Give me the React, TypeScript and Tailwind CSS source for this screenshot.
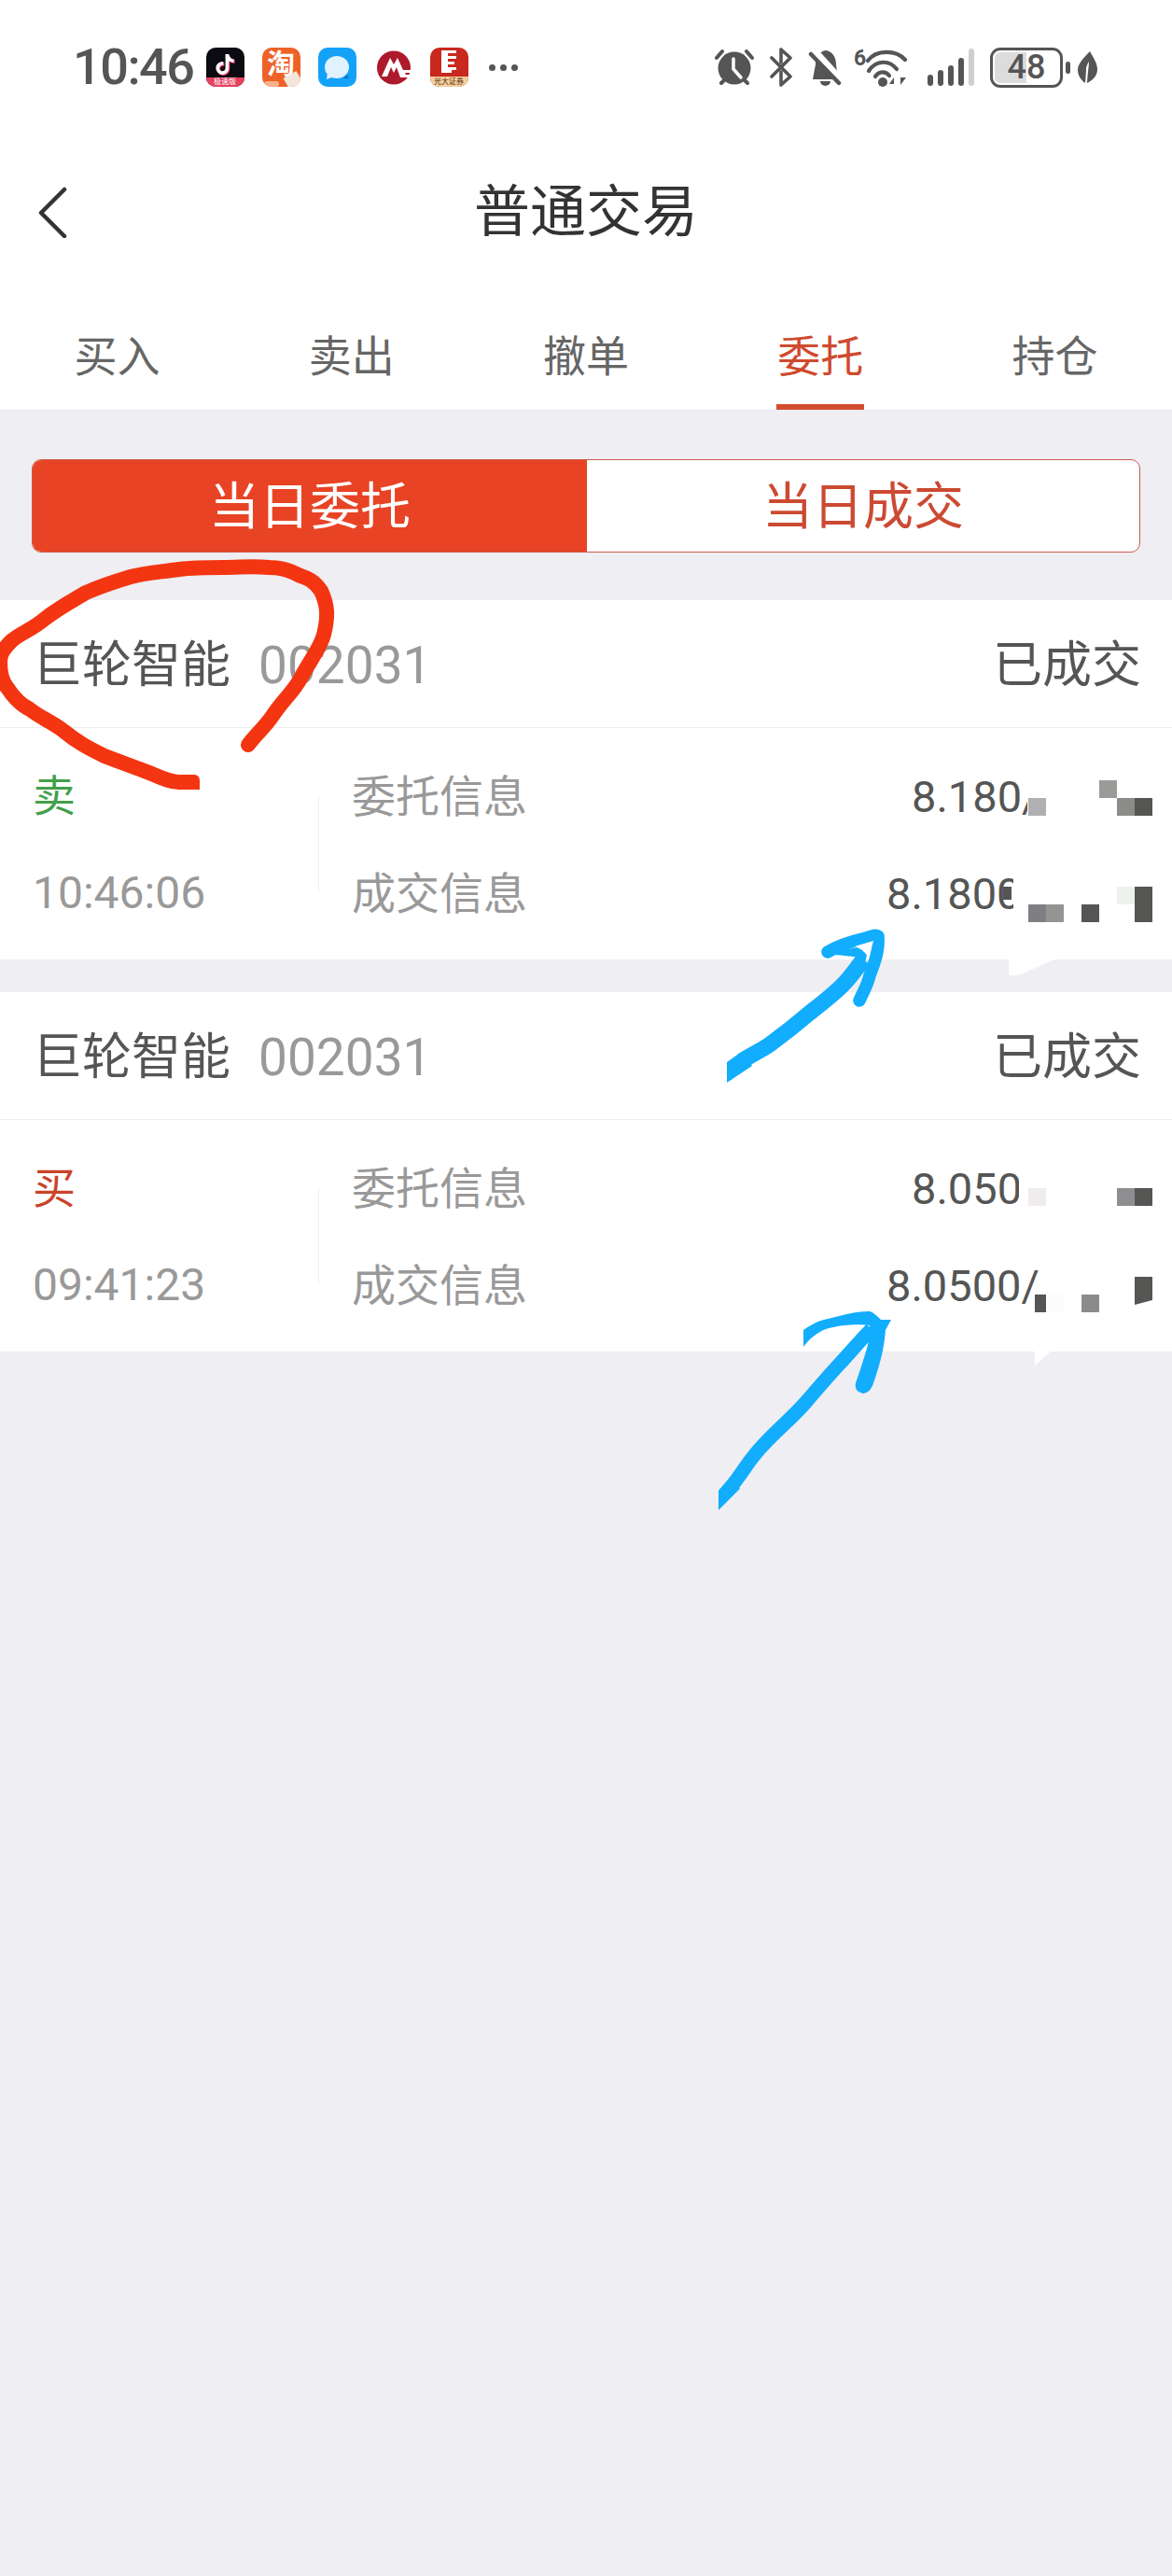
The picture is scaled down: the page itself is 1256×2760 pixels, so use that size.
import React from "react";
import { FaTiktok } from "react-icons/fa";

const FONT = "[font-family:Roboto,'Noto_Sans_CJK_SC',sans-serif]";

function AppIcons() {
  return (
    <div className="flex items-center gap-[19px] ml-[13px]">
      <div className="relative w-[41px] h-[42px] rounded-[10px] bg-[#0b0b12] overflow-hidden flex justify-center pt-[7px]">
        <FaTiktok className="text-white text-[22px] drop-shadow-[1px_1px_0_#f0295a]" />
        <div className="absolute left-0 right-0 bottom-0 h-[10px] bg-[#e8405e] text-white text-[8px] leading-[10px] text-center">极速版</div>
      </div>
      <div className="relative w-[41px] h-[42px] rounded-[10px] bg-[#ee6228] overflow-hidden flex justify-center">
        <span className="text-white text-[30px] leading-[36px] font-bold">淘</span>
        <div className="absolute left-[2px] bottom-0 w-[16px] h-[6px] rounded-full bg-[#f6b28c]" />
        <div className="absolute right-0 bottom-0 w-[16px] h-[14px] bg-[#f3e6dc] rotate-[-30deg]" />
      </div>
      <svg width="41" height="42" viewBox="0 0 41 42">
        <rect width="41" height="42" rx="10" fill="#14a2f8" />
        <path d="M27 33 L33 33 L31 29 Z" fill="#0a73d6" />
        <ellipse cx="20" cy="21" rx="13" ry="12" fill="#dff2fe" />
        <path d="M10 27 L9 34 L17 31 Z" fill="#dff2fe" />
      </svg>
      <svg width="36" height="37" viewBox="0 0 36 37" className="ml-[3px] mr-[2px]">
        <circle cx="18" cy="18.5" r="18" fill="#ad1a2c" />
        <path d="M5 28 L14 8 L18 15 L22 8 L28 21 L36 21 L36 24 L30 24 L31 26 L36 26 L35 29 L25 29 L21 18 L18 24 L15 18 L11 28 Z" fill="#fff" />
      </svg>
      <div className="relative w-[41px] h-[42px] rounded-[10px] bg-[#c8281e] overflow-hidden flex flex-col items-center">
        <svg width="22" height="28" viewBox="0 0 22 28" className="mt-[3px]">
          <path d="M3 0 H19 V3 H10 V6 H19 V9 H10 V12 H17 V15 H10 V18 H19 V21 H14 V24 H3 Z" fill="#fff" />
        </svg>
        <div className="absolute left-0 right-0 bottom-0 h-[11px] bg-[#f1cf9b] text-[#5a2a10] text-[8px] leading-[11px] text-center">光大证券</div>
      </div>
      <div className="flex gap-[5px] ml-[3px]">
        <span className="w-[7px] h-[7px] rounded-full bg-[#555]" />
        <span className="w-[7px] h-[7px] rounded-full bg-[#555]" />
        <span className="w-[7px] h-[7px] rounded-full bg-[#555]" />
      </div>
    </div>
  );
}

function StatusIcons() {
  return (
    <div className="ml-auto pr-[80px] flex items-center">
      <svg width="42" height="40" viewBox="0 0 42 40" fill="none" stroke="#555" strokeWidth="4" strokeLinecap="round">
        <path d="M2 10 L8 3 M40 10 L34 3 M7 37 L10 34 M35 37 L32 34" />
        <circle cx="21" cy="21" r="17.5" fill="#555" stroke="none" />
        <path d="M20 11 V22 L28 31" stroke="#fff" strokeWidth="3.5" />
      </svg>
      <svg width="26" height="42" viewBox="0 0 26 42" fill="none" stroke="#555" strokeWidth="3.6" strokeLinecap="round" strokeLinejoin="round" className="ml-[16px]">
        <path d="M3 11 L23 31 L13 40 L13 26 M3 31 L23 11 L13 2 L13 16" />
      </svg>
      <svg width="36" height="41" viewBox="0 0 36 41" className="ml-[16px]">
        <path d="M19 2 C12 3 8 9 8 17 L5 33 L32 33 L30 17 C30 9 26 3 19 2Z" fill="#555" />
        <path d="M13 35 H24 A5.5 5 0 0 1 13 35Z" fill="#555" />
        <path d="M6 2 L36 35" stroke="#fff" strokeWidth="8" />
        <path d="M3 6 L33 37" stroke="#555" strokeWidth="4.5" strokeLinecap="round" />
      </svg>
      <svg width="57" height="44" viewBox="0 0 57 44" fill="none" stroke="#555" strokeWidth="4.2" strokeLinecap="round" className="ml-[13px]">
        <text x="0" y="20" fill="#555" stroke="none" fontSize="23" fontWeight="700" fontFamily="Roboto, sans-serif">6</text>
        <path d="M15 15 C24 3 45 3 55 14" />
        <path d="M16 26 C24 14 38 14 46 24" />
        <path d="M23 32 C27 26 34 26 38 31" />
        <circle cx="31" cy="38" r="5" fill="#555" stroke="none" />
        <path d="M43 43 V33 L38 40 H43 M50 43 V33 L56 33 L50 41 Z" fill="#555" stroke="none" />
      </svg>
      <div className="ml-[22px] flex items-end gap-[4.5px] h-[40px]">
        <span className="w-[6.5px] h-[12px] rounded-full bg-[#555]" />
        <span className="w-[6.5px] h-[17px] rounded-full bg-[#555]" />
        <span className="w-[6.5px] h-[22px] rounded-full bg-[#555]" />
        <span className="w-[6.5px] h-[30px] rounded-full bg-[#555]" />
        <span className="w-[6.5px] h-[40px] rounded-full bg-[#cfcfcf]" />
      </div>
      <div className="ml-[17px] relative w-[78px] h-[43px] rounded-[11px] border-[3px] border-[#555] bg-white overflow-hidden flex items-center justify-center">
        <div className="absolute left-[2px] top-[2px] bottom-[2px] w-[34px] rounded-l-[6px] bg-[#dcdcdc]" />
        <span className="relative text-[#555] text-[36px] leading-none font-medium">48</span>
      </div>
      <span className="ml-[3px] w-[5px] h-[13px] rounded-full bg-[#555]" />
      <svg width="21" height="34" viewBox="0 0 21 34" className="ml-[8px]">
        <path d="M13 0 C5 8 0 14 0 20 C0 27 5 32 8 34 L9 20 C9 15 11 13 12 11 C12 15 11 20 10 34 C18 30 21 25 21 19 C21 12 16 6 13 0Z" fill="#555" />
      </svg>
    </div>
  );
}

function Row({ label, value, ml }: { label: string; value: string; ml: string }) {
  return (
    <div className="h-[104px] flex items-center">
      <span className="w-[184px] text-[47px] text-[#999] leading-none whitespace-nowrap">{label}</span>
      <span className={`${ml} text-[47px] text-[#555] leading-none whitespace-nowrap`}>{value}</span>
    </div>
  );
}

function Card({
  side,
  sideColor,
  time,
  rows,
  className,
}: {
  side: string;
  sideColor: string;
  time: string;
  rows: React.ReactNode;
  className?: string;
}) {
  return (
    <div className={`bg-white ${className ?? ""}`}>
      <div className="h-[137px] pt-[5px] pl-[35px] pr-[33px] flex items-center border-b border-[#eeeeee]">
        <span className="text-[53px] text-[#555] leading-none">巨轮智能</span>
        <span className="ml-[30px] text-[55px] text-[#999] leading-none">002031</span>
        <span className="ml-auto text-[53px] text-[#555] leading-none">已成交</span>
      </div>
      <div className="h-[248px] flex pt-[21px]">
        <div className="w-[341px] pl-[35px]">
          <div className={`h-[104px] flex items-center text-[46px] leading-none ${sideColor}`}>{side}</div>
          <div className="h-[104px] flex items-center text-[48px] text-[#999] leading-none">{time}</div>
        </div>
        <div className="w-px h-[101px] mt-[53px] bg-[#eeeeee]" />
        <div className="pl-[35px]">{rows}</div>
      </div>
    </div>
  );
}

function Overlay() {
  const rects: [number, number, number, number, string][] = [
    [1101, 830, 40, 50, "#ffffff"],
    [1086, 935, 60, 55, "#ffffff"],
    [1092, 1245, 40, 50, "#ffffff"],
    [1102, 855, 19, 19, "#b1afb2"],
    [1178, 836, 19, 19, "#9a9b99"],
    [1197, 855, 19, 19, "#8b8c8a"],
    [1216, 855, 19, 19, "#555653"],
    [1102, 969, 19, 19, "#807e82"],
    [1121, 969, 19, 19, "#949593"],
    [1159, 969, 19, 19, "#555653"],
    [1197, 950, 19, 19, "#eef2ef"],
    [1216, 950, 19, 38, "#555653"],
    [1075, 950, 9, 14, "#555653"],
    [1102, 1273, 19, 19, "#efebef"],
    [1197, 1273, 19, 19, "#8e8d8f"],
    [1216, 1273, 19, 19, "#555653"],
    [1109, 1387, 12, 19, "#555653"],
    [1121, 1387, 19, 19, "#fdfbfd"],
    [1159, 1387, 19, 19, "#8b8c8a"],
  ];
  return (
    <svg className="absolute left-0 top-0 pointer-events-none" width="1256" height="2760" viewBox="0 0 1256 2760" fill="none">
      <path d="M1081 1028 H1130 L1092 1045 H1081 Z" fill="#fff" />
      <path d="M1109 1448 H1126 L1109 1463 Z" fill="#fff" />
      {rects.map(([x, y, w, h, c], i) => (
        <rect key={i} x={x} y={y} width={w} height={h} fill={c} />
      ))}
      <path d="M1216 1368 H1235 V1393 L1216 1398 Z" fill="#555653" />
      {/* red hand-drawn circle */}
      <path
        d="M266 798 C275 786 283 780 292 767 C303 750 314 742 322 727 C332 708 343 695 347 680 C352 660 351 648 344 633 C336 621 328 619 322 617 C306 609 298 608 288 608 C270 606 258 608 240 608 C222 608 208 608 192 610 C172 613 158 613 140 618 C120 624 110 627 92 635 C75 645 62 652 48 663 C34 675 22 678 12 687 C2 697 0 702 0 710 C0 722 3 731 8 737 C15 748 22 755 32 760 C45 770 55 773 68 783 C85 797 98 803 112 810 C130 817 145 822 160 828 C172 833 182 838 192 838"
        stroke="#f43511"
        strokeWidth="16"
        strokeLinecap="round"
      />
      <path d="M190 830 H208 C212 830 214 833 214 837 V846 H190 Z" fill="#f43511" />
      {/* blue arrow 1 */}
      <path d="M779 1138 L796 1126 L806 1142 L779 1160 Z" fill="#12adfc" />
      <path
        d="M795 1137 C805 1130 815 1126 825 1119 C840 1108 855 1096 868 1085 C883 1073 897 1063 908 1050 C915 1042 920 1035 925 1028"
        stroke="#12adfc"
        strokeWidth="17"
      />
      <path d="M887 1020 C900 1012 915 1008 928 1005 C934 1003 938 1001 941 1003 C942 1018 938 1030 932 1045 C930 1055 925 1063 921 1072" stroke="#12adfc" strokeWidth="13.5" strokeLinecap="round" strokeLinejoin="round" />
      <path d="M887 1022 C900 1024 912 1024 920 1026 L926 1035 L932 1012 Z" fill="#12adfc" />
      <path d="M916 1014 L936 1008 L931 1027 C929 1022 923 1016 916 1014 Z" fill="#fff" />
      {/* blue arrow 2 */}
      <path d="M770 1597 L782 1583 L793 1595 L770 1618 Z" fill="#12adfc" />
      <path
        d="M786 1590 C789 1586 791 1583 794 1579 C802 1567 810 1556 820 1546 C834 1531 850 1518 863 1503 C875 1489 888 1474 900 1461 C912 1448 922 1436 934 1424"
        stroke="#12adfc"
        strokeWidth="15"
      />
      <path d="M861 1425 C868 1420 875 1416 883 1414 C900 1410 915 1405 932 1405 C936 1406 940 1410 944 1414 L955 1414 L949 1425 C948 1440 944 1460 936 1482 C934 1488 931 1492 925 1493 C918 1491 916 1488 917 1482 C922 1467 928 1450 932 1433 L932 1420 C925 1419 905 1418 885 1424 C875 1428 868 1434 861 1443 Z" fill="#12adfc" />
    </svg>
  );
}

export default function App() {
  return (
    <div className={`relative w-[1256px] h-[2760px] bg-[#eeeef3] overflow-hidden ${FONT}`}>
      <div className="bg-white">
        <div className="h-[144px] pl-[78px] flex items-center">
          <span className="text-[54px] leading-none text-[#555] font-medium tracking-[-1.5px]">10:46</span>
          <AppIcons />
          <StatusIcons />
        </div>
        <div className="relative h-[166px] flex items-center justify-center">
          <svg width="32" height="55" viewBox="0 0 32 55" fill="none" className="absolute left-[40px] top-[56px]" stroke="#333" strokeWidth="4.5" strokeLinecap="round" strokeLinejoin="round">
            <path d="M29 3 L4 28 L29 53" />
          </svg>
          <span className="text-[60px] leading-none text-[#333] mt-[2px]">普通交易</span>
        </div>
        <div className="h-[130px] flex border-b border-[#e8e8e8]">
          {["买入", "卖出", "撤单", "委托", "持仓"].map((t) => (
            <div key={t} className="flex-1 flex justify-center">
              <div
                className={
                  t === "委托"
                    ? "h-full pt-[49px] px-[1px] border-b-[6px] border-[#d24c30] text-[46px] leading-[46px] text-[#cf4a2e]"
                    : "h-full pt-[49px] text-[46px] leading-[46px] text-[#666]"
                }
              >
                {t}
              </div>
            </div>
          ))}
        </div>
      </div>

      <div className="mx-[34px] mt-[52px] h-[100px] rounded-[10px] border border-[#cc5a48] bg-white overflow-hidden flex">
        <div className="w-[594px] bg-[#e84324] flex items-center justify-center text-white text-[54px] leading-none pt-[3px]">当日委托</div>
        <div className="flex-1 flex items-center justify-center text-[#cc4a32] text-[54px] leading-none pt-[3px]">当日成交</div>
      </div>

      <Card
        className="mt-[51px]"
        side="卖"
        sideColor="text-[#43a04a]"
        time="10:46:06"
        rows={
          <>
            <Row label="委托信息" value="8.180/" ml="ml-[416px]" />
            <Row label="成交信息" value="8.1800" ml="ml-[389px]" />
          </>
        }
      />
      <Card
        className="mt-[35px]"
        side="买"
        sideColor="text-[#c9432b]"
        time="09:41:23"
        rows={
          <>
            <Row label="委托信息" value="8.050" ml="ml-[416px]" />
            <Row label="成交信息" value="8.0500/" ml="ml-[389px]" />
          </>
        }
      />
      <Overlay />
    </div>
  );
}
